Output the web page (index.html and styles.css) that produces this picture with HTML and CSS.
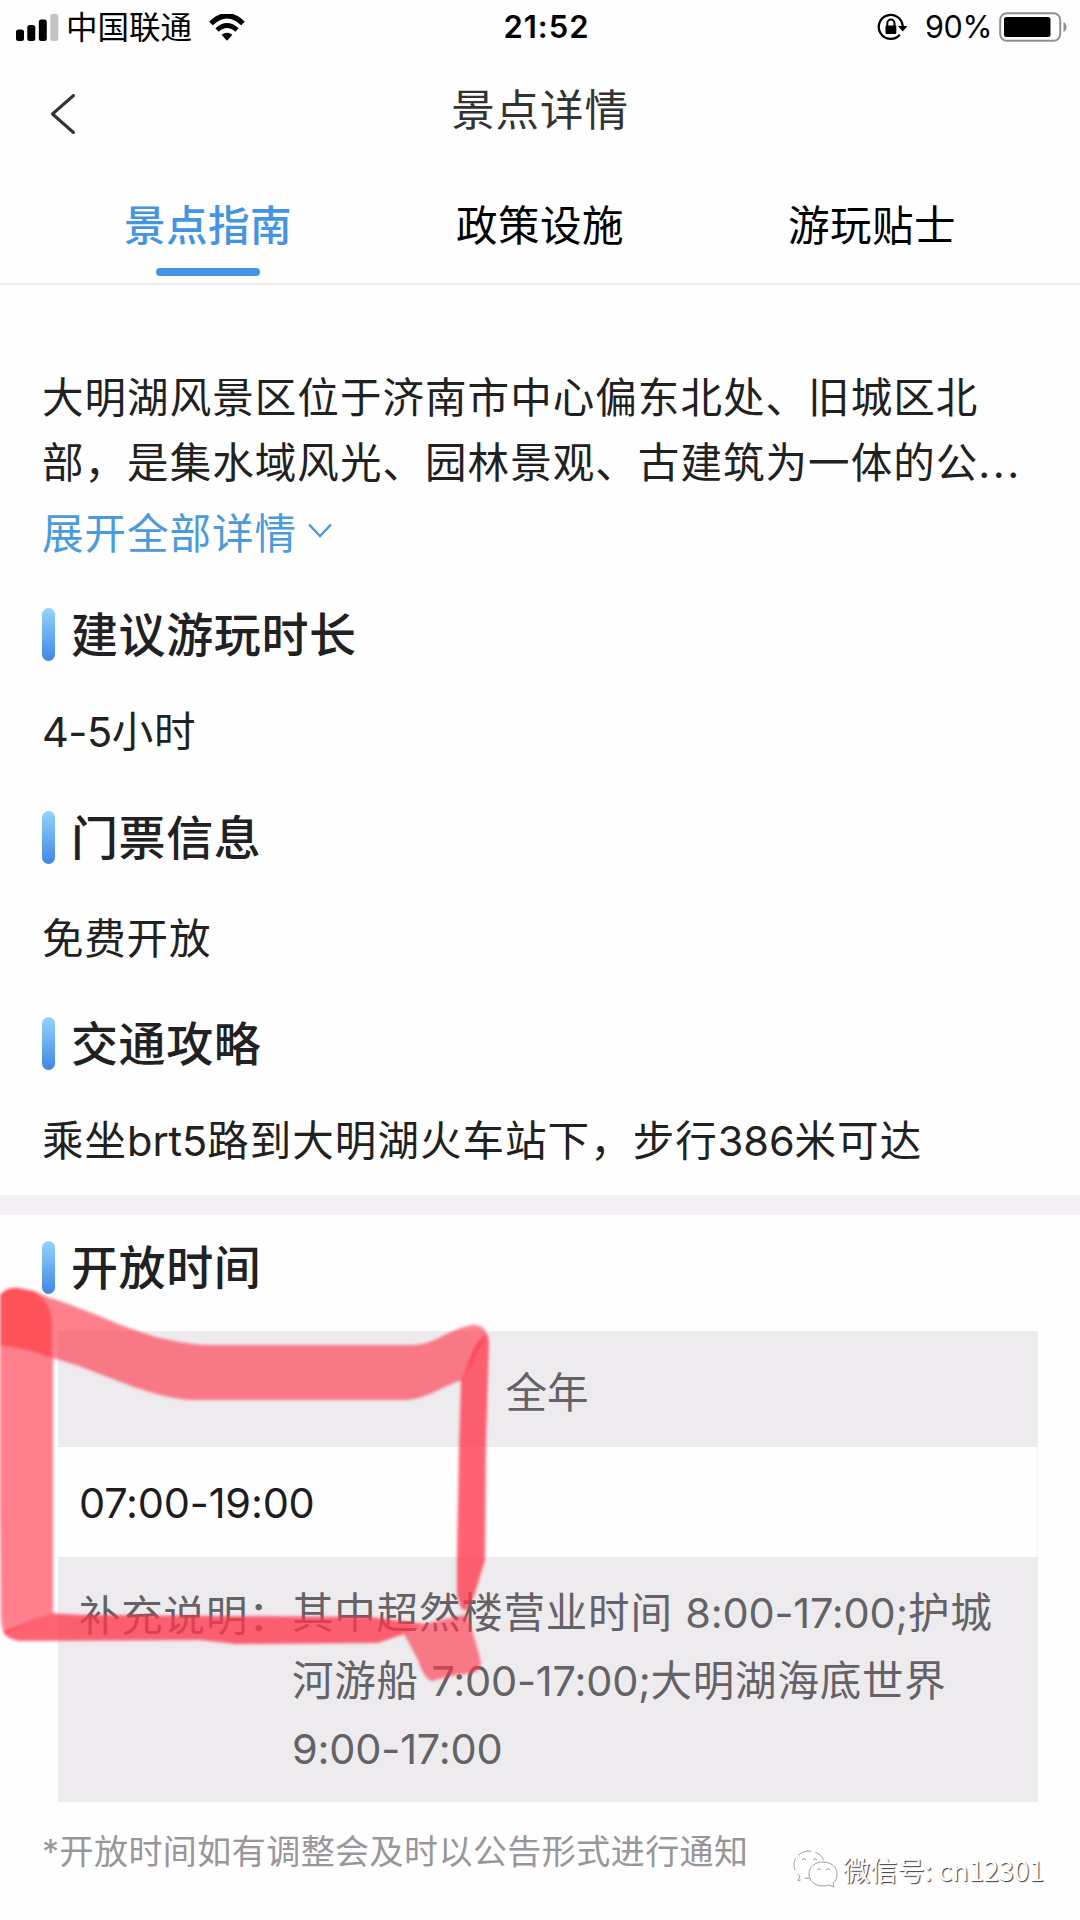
FILE: index.html
```html
<!DOCTYPE html>
<html lang="zh-CN">
<head>
<meta charset="utf-8">
<title>景点详情</title>
<link rel="stylesheet" href="styles.css">
</head>
<body>
<div class="screen">
  <header class="status">
    <div class="status-left">
      <svg class="signal" width="43" height="27" viewBox="0 0 43 27">
        <rect x="0" y="15.500" width="8" height="11.500" rx="2.500"/>
        <rect x="11.300" y="11" width="8" height="16" rx="2.500"/>
        <rect x="22.800" y="5.500" width="8" height="21.500" rx="2.500"/>
        <rect x="34.300" y="0" width="8" height="27" rx="2.500" fill="#c4c4c4"/>
      </svg>
      <span class="carrier">中国联通</span>
      <svg class="wifi" width="36" height="27" viewBox="0 0 36 27">
        <path d="M2 9.500Q18-6 34 9.500" fill="none" stroke="#000" stroke-width="5.200"/>
        <path d="M8 16Q18 7 28 16" fill="none" stroke="#000" stroke-width="4.800"/>
        <path d="M12.600 20.700Q18 16.600 23.400 20.700L18 26.800Z"/>
      </svg>
    </div>
    <span class="clock">21:52</span>
    <div class="status-right">
      <svg class="lock" width="31" height="28" viewBox="0 0 31 28">
        <path d="M22.800 21.800A12 12 0 1 1 25.700 13" fill="none" stroke="#000" stroke-width="2.300"/>
        <path d="M21 13h9.500l-4.800 5.500z"/>
        <path d="M10.300 13v-2.800a3.600 3.600 0 0 1 7.200 0V13" fill="none" stroke="#000" stroke-width="2"/>
        <rect x="8.500" y="12.500" width="10.800" height="8.500" rx="1"/>
      </svg>
      <span class="percent">90%</span>
      <svg class="battery" width="69" height="30" viewBox="0 0 69 30">
        <rect x="1.200" y="1.200" width="60" height="27.600" rx="6.500" fill="none" stroke="#8f8f8f" stroke-width="2"/>
        <rect x="5" y="5" width="46.500" height="20" rx="2.500"/>
        <path d="M64.500 10q3 1.500 3 5t-3 5z" fill="#8f8f8f"/>
      </svg>
    </div>
  </header>

  <nav class="nav">
    <svg class="back" width="26" height="42" viewBox="0 0 26 42"><path d="M23.500 2.500L2.500 21L23.500 39.500" fill="none" stroke="#333" stroke-width="3" stroke-linecap="round" stroke-linejoin="round"/></svg>
    <h1 class="nav-title">景点详情</h1>
  </nav>

  <div class="tabs">
    <div class="tab tab-active">景点指南</div>
    <div class="tab">政策设施</div>
    <div class="tab">游玩贴士</div>
  </div>

  <main>
    <section class="guide">
      <p class="intro">大明湖风景区位于济南市中心偏东北处、旧城区北<br>部，是集水域风光、园林景观、古建筑为一体的公<span class="dots">...</span></p>
      <div class="expand">展开全部详情<svg width="26" height="18" viewBox="0 0 26 18"><path d="M2 2.500L13 14L24 2.500" fill="none" stroke="#4a9bdc" stroke-width="2.500"/></svg></div>
      <h2 class="head head-duration">建议游玩时长</h2>
      <p class="text text-duration"><span class="num-tight">4-5</span>小时</p>
      <h2 class="head head-ticket">门票信息</h2>
      <p class="text text-ticket">免费开放</p>
      <h2 class="head head-traffic">交通攻略</h2>
      <p class="text text-traffic">乘坐<span class="num">brt5</span>路到大明湖火车站下，步行<span class="num">386</span>米可达</p>
    </section>
    <div class="band"></div>
    <section class="hours">
      <h2 class="head head-hours">开放时间</h2>
      <div class="table">
        <div class="row row-season">全年</div>
        <div class="row row-time">07:00-19:00</div>
        <div class="row row-note">
          <span class="note-label">补充说明：</span>
          <span class="note-body">其中超然楼营业时间 <span class="num">8:00-17:00;</span>护城<br>河游船 <span class="num">7:00-17:00;</span>大明湖海底世界<br><span class="num">9:00-17:00</span></span>
        </div>
      </div>
      <p class="footnote">*开放时间如有调整会及时以公告形式进行通知</p>
    </section>
  </main>

  <svg class="marker" width="500" height="420" viewBox="0 1280 500 420">
    <g fill="#ff374b">
      <path opacity=".64" d="M-3 1345Q28 1346 53 1358L53 1613L30 1622L5 1634Q1 1630 1 1615L-1 1400Z"/>
      <path opacity=".64" d="M34 1291L50 1298C85 1308 135 1334 170 1340Q192 1345 210 1345L412 1345C435 1345 448 1329 472 1325Q484 1324 487 1335L462 1380C445 1385 425 1400 405 1400L195 1400C150 1400 95 1368 52 1358L52 1325Q51 1305 34 1291Z"/>
      <path opacity=".78" d="M487 1334Q489 1338 489 1345L486 1440L485 1560L474 1596L466 1611L461 1608L457 1595L457 1550L459 1450L461 1380C470 1365 470 1345 487 1334Z"/>
      <path opacity=".78" d="M3 1632L30 1621L53 1613Q70 1615 100 1615L370 1617L425 1624L404 1634L378 1643L235 1644L200 1640L20 1641Q8 1640 3 1632Z"/>
      <path opacity=".64" d="M404 1634L425 1624L445 1619L467 1614L475 1640L481 1662Q480 1672 472 1673L450 1676L432 1681Q424 1679 418 1660Z"/>
    </g>
    <path fill="#fd454d" opacity=".93" d="M-3 1300Q4 1286 18 1288L34 1291Q52 1304 52 1325L52 1358Q25 1347 -3 1345Z"/>
  </svg>

  <div class="watermark">
    <svg width="46" height="42" viewBox="0 0 46 42">
      <g fill="#fff" stroke="#a09ea4" stroke-width="1">
        <path d="M16 3C8 3 1 9 1 17c0 5 3 9 6 11l-2 5 7-3q3 1 7 0C30 28 32 21 31 13 29 7 23 3 16 3Z" stroke-dasharray="12 4"/>
        <path d="M30 14c-8 0-14 5-14 12s6 12 14 12q4 0 6-1l5 2-1-4c3-2 4-5 4-9 0-7-6-12-14-12Z"/>
        <path d="M9 12q2-3 4 0M20 12q2-3 4 0M24 22q2-3 4 0M33 22q2-3 4 0" fill="none"/>
      </g>
    </svg>
    <span>微信号: cn12301</span>
  </div>
</div>
</body>
</html>
```
FILE: styles.css
```css
* { box-sizing: border-box; margin: 0; padding: 0; }

body {
  width: 1080px;
  height: 1920px;
  overflow: hidden;
  background: #fefefe;
  color: #212121;
  font-family: Inter, "Noto Sans CJK SC", sans-serif;
}

.screen { position: relative; width: 1080px; height: 1920px; overflow: hidden; }

.status {
  display: grid;
  grid-template-columns: 1fr auto 1fr;
  align-items: center;
  height: 52px;
  padding: 0 12px 0 16px;
  color: #000;
  line-height: 52px;
}
.status-left, .status-right { display: flex; align-items: center; }
.status-right { justify-content: flex-end; }
.carrier { margin-left: 7px; padding-top: 2px; font-size: 31.500px; }
.wifi { margin-left: 17px; }
.clock { padding-left: 9px; font-size: 31px; font-weight: 600; letter-spacing: 1px; }
.percent { margin-left: 17px; font-size: 30.500px; letter-spacing: -.4px; }
.battery { margin-left: 7px; }

.nav { position: relative; height: 116px; }
.back { position: absolute; left: 50px; top: 41px; }
.nav-title { padding-top: 1px; text-align: center; font-size: 43.500px; font-weight: 400; line-height: 114px; letter-spacing: .9px; color: #333; }

.tabs {
  display: grid;
  grid-template-columns: repeat(3, 332px);
  justify-content: center;
  height: 117px;
  border-bottom: 2px solid #ececec;
  color: #000;
}
.tab { position: relative; text-align: center; font-size: 41.500px; line-height: 117px; letter-spacing: .5px; }
.tab-active { color: #4494e4; font-weight: 500; }
.tab-active::after {
  content: "";
  position: absolute;
  left: 114px;
  bottom: 9px;
  width: 104px;
  height: 8px;
  border-radius: 4px;
  background: #4593e6;
}

.guide { height: 910px; padding: 81px 42px 0; }
.intro { font-size: 41.500px; line-height: 65px; letter-spacing: 1.060px; white-space: nowrap; }
.dots { letter-spacing: 2.500px; }
.expand {
  display: flex;
  align-items: center;
  gap: 10px;
  height: 66px;
  margin-top: 2px;
  font-size: 41.500px;
  letter-spacing: 1px;
  color: #4a9bdc;
}

.head {
  display: flex;
  align-items: center;
  gap: 16px;
  height: 53px;
  font-size: 47px;
  font-weight: 500;
  line-height: 53px;
  letter-spacing: .6px;
  color: #212124;
}
.head::before {
  content: "";
  width: 13px;
  height: 53px;
  border-radius: 6.500px;
  background: linear-gradient(#92d5fa, #3f86e6);
}
.head-duration { margin-top: 44px; }
.head-ticket { margin-top: 54px; }
.head-traffic { margin-top: 53px; }

.text { font-size: 41.500px; line-height: 50px; letter-spacing: .8px; }
.text-duration { margin-top: 46px; }
.text-ticket { margin-top: 50px; }
.text-traffic { margin-top: 46px; letter-spacing: 1.050px; }
.num { letter-spacing: -.1px; }
.num-tight { letter-spacing: -.5px; }

.band { height: 20px; background: #f3f1f5; }

.hours { padding: 26px 42px 0; }
.table { margin: 37px 0 0 16px; width: 980px; font-size: 41.500px; color: #646267; }
.row { background: #edebee; }
.row-season { height: 116px; padding-top: 4px; padding-right: 2px; text-align: center; line-height: 116px; }
.row-time { height: 110px; padding-left: 21px; border-right: 1px solid #f5f3f6; background: #fefefe; line-height: 112px; letter-spacing: -.2px; color: #1d1c20; }
.row-note { display: flex; height: 245px; padding: 22px 0 0 21px; line-height: 68px; letter-spacing: .8px; white-space: nowrap; }
.row-note .num { letter-spacing: -.2px; }
.note-label { width: 213px; padding-top: 3px; }

.footnote { margin-top: 25px; font-size: 34px; line-height: 50px; letter-spacing: .450px; color: #98969a; }

.marker { position: absolute; left: 0; top: 1280px; filter: blur(1.600px); }

.watermark {
  position: absolute;
  left: 793px;
  top: 1846px;
  display: flex;
  align-items: center;
  gap: 4px;
  font-family: "Noto Sans CJK SC", sans-serif;
  font-size: 27.200px;
  line-height: 46px;
  white-space: nowrap;
  color: #fff;
  text-shadow: 1px 1px 1px #3c383f;
}
```
